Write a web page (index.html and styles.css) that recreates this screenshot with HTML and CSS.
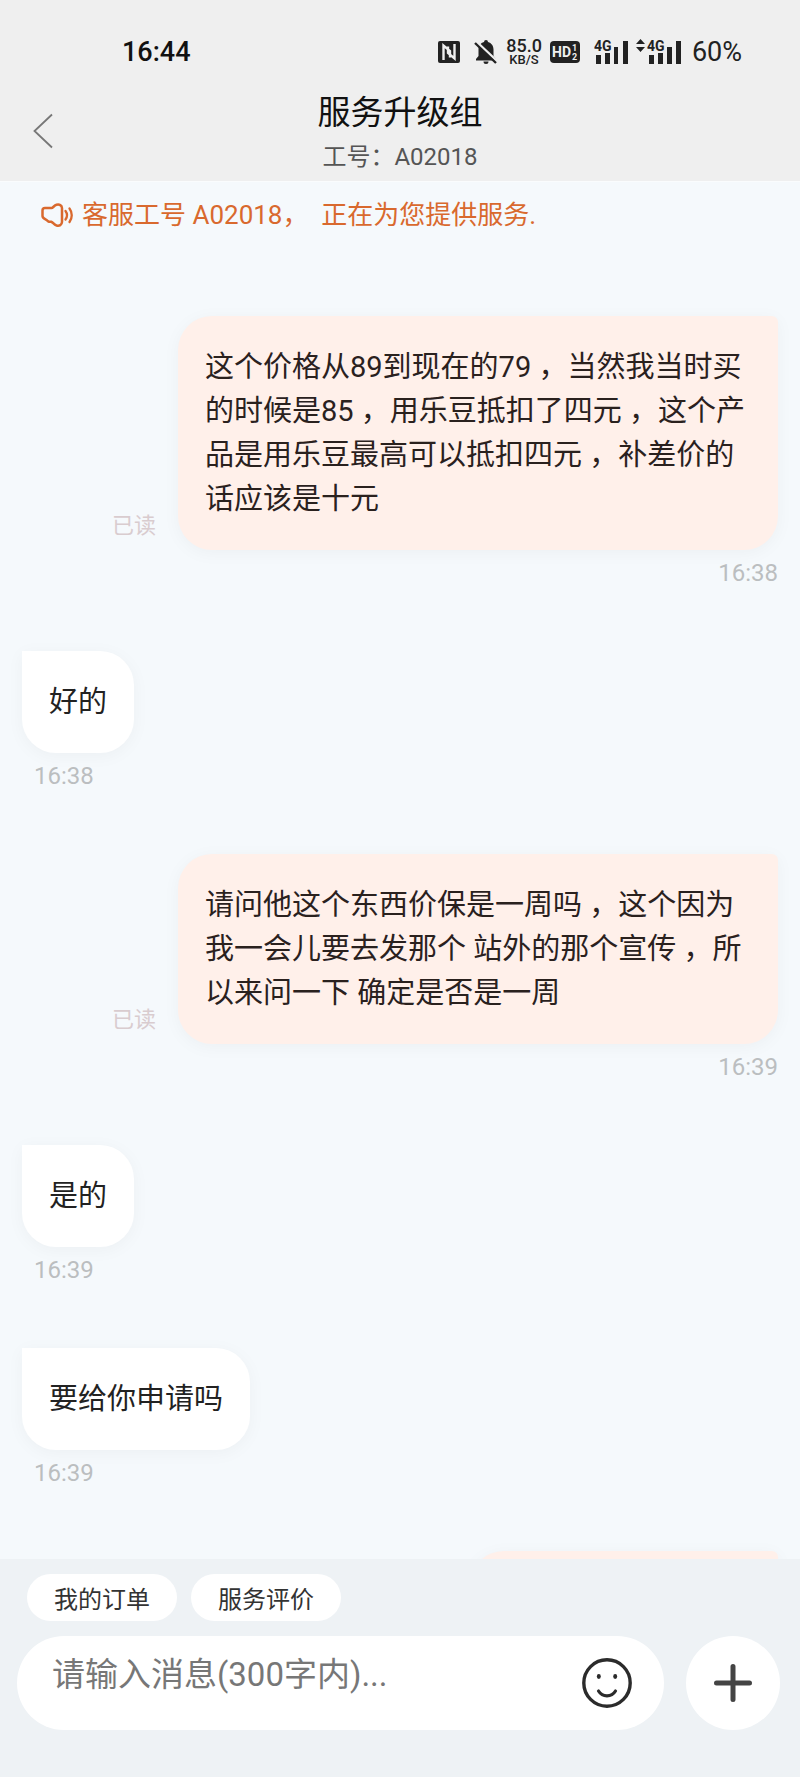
FILE: index.html
```html
<!DOCTYPE html>
<html lang="zh-CN">
<head>
<meta charset="utf-8">
<meta name="viewport" content="width=device-width, initial-scale=1">
<title>服务升级组</title>
<link rel="stylesheet" href="styles.css">
</head>
<body>
<header class="header">
  <div class="status">
    <span class="clock">16:44</span>
    <div class="indicators">
      <svg class="nfc" width="22" height="24" viewBox="0 0 22 24" aria-hidden="true">
        <rect x="0" y="1" width="22" height="22" rx="2" fill="#222"/>
        <path d="M5.500 20V5.500L12 11v6.500M16.500 4v14.500L10 13V6.500" fill="none" stroke="#efefef" stroke-width="2.400"/>
      </svg>
      <svg class="bell" width="24" height="26" viewBox="0 0 24 26" aria-hidden="true">
        <path d="M12 1a2 2 0 0 1 2 2c3.500 1 5.500 4 5.500 7.500V17l2.500 3v1.500H2V20l2.500-3v-6.500C4.500 7 6.500 4 10 3a2 2 0 0 1 2-2zM9.500 22.500h5a2.500 2.500 0 0 1-5 0z" fill="#222"/>
        <path d="M1 1.500 24 23" stroke="#efefef" stroke-width="2.500"/>
        <path d="M1 4 22 24" stroke="#222" stroke-width="2.400"/>
      </svg>
      <span class="speed"><span>85.0</span><span class="unit">KB/S</span></span>
      <svg class="hd" width="30" height="22" viewBox="0 0 30 22" aria-hidden="true">
        <rect width="30" height="22" rx="4" fill="#222"/>
        <text x="2" y="16" font-size="14" font-weight="700" fill="#efefef">HD</text>
        <text x="22" y="10" font-size="9" font-weight="700" fill="#efefef">1</text>
        <text x="22" y="19" font-size="9" font-weight="700" fill="#efefef">2</text>
      </svg>
      <svg class="signal" width="34" height="26" viewBox="0 0 34 26" aria-hidden="true">
        <text x="0" y="12" font-size="14" font-weight="700" fill="#222">4G</text>
        <path d="M2 16h5v9H2zM11 14h5v11h-5zM20 8h4v17h-4zM29 2h5v23h-5z" fill="#222"/>
      </svg>
      <svg class="signal-alt" width="46" height="26" viewBox="0 0 46 26" aria-hidden="true">
        <path d="M0 5 4.500 0 9 5zM0 8h9L4.500 13z" fill="#222"/>
        <text x="11" y="12" font-size="14" font-weight="700" fill="#222">4G</text>
        <path d="M13 16h5v9h-5zM22 14h5v11h-5zM31 8h5v17h-5zM40 2h5v23h-5z" fill="#222"/>
      </svg>
      <span class="battery">60%</span>
    </div>
  </div>
  <div class="titlebar">
    <button class="back" type="button" aria-label="返回">
      <svg width="22" height="36" viewBox="0 0 22 36" aria-hidden="true"><path d="M20 1.500 2.500 18 20 34.500" fill="none" stroke="#777" stroke-width="1.800"/></svg>
    </button>
    <div class="heading">
      <h1 class="title">服务升级组</h1>
      <p class="agent">工号：A02018</p>
    </div>
  </div>
</header>

<main class="chat">
  <p class="notice">
    <svg width="34" height="26" viewBox="0 0 34 26" aria-hidden="true">
      <path d="M5 6h6.500c1.500 0 2.500-2.500 5-3.200 3-.8 5.300.5 5.500 3.200v14c-.2 3-2.500 4.300-5.500 3.500-2.500-.7-3.500-3-5-3.700H9c-1 0-1.500-1.500-3.500-2.500-2-1-3-1.800-3-3.300V8.500C2.500 7 3.500 6 5 6z" fill="none" stroke="#d9692e" stroke-width="2.500" stroke-linejoin="round"/>
      <path d="M25.500 9c1.800 2.500 1.800 6 0 8.500M29.500 6.500c3 4 3 9.500 0 13.500" fill="none" stroke="#d9692e" stroke-width="2.300" stroke-linecap="round"/>
    </svg>
    <span>客服工号 A02018，&nbsp; 正在为您提供服务.</span>
  </p>

  <article class="message sent">
    <div class="row"><span class="read">已读</span><p class="bubble">这个价格从89到现在的79 ，当然我当时买的时候是85 ，用乐豆抵扣了四元 ，这个产品是用乐豆最高可以抵扣四元 ，补差价的话应该是十元</p></div>
    <time class="time">16:38</time>
  </article>
  <article class="message received">
    <div class="row"><p class="bubble">好的</p></div>
    <time class="time">16:38</time>
  </article>
  <article class="message sent">
    <div class="row"><span class="read">已读</span><p class="bubble">请问他这个东西价保是一周吗 ，这个因为我一会儿要去发那个 站外的那个宣传 ，所以来问一下 确定是否是一周</p></div>
    <time class="time">16:39</time>
  </article>
  <article class="message received">
    <div class="row"><p class="bubble">是的</p></div>
    <time class="time">16:39</time>
  </article>
  <article class="message received">
    <div class="row"><p class="bubble">要给你申请吗</p></div>
    <time class="time">16:39</time>
  </article>
  <article class="message sent">
    <div class="row"><p class="bubble partial"></p></div>
  </article>
</main>

<footer class="composer">
  <div class="shortcuts">
    <button class="shortcut" type="button">我的订单</button>
    <button class="shortcut" type="button">服务评价</button>
  </div>
  <div class="entry">
    <div class="field">
      <input class="input" type="text" maxlength="300" aria-label="消息" placeholder="请输入消息(300字内)...">
      <button class="emoji" type="button" aria-label="表情">
        <svg width="50" height="50" viewBox="0 0 50 50" aria-hidden="true">
          <circle cx="25" cy="25" r="23.200" fill="none" stroke="#2b2b2b" stroke-width="3.400"/>
          <ellipse cx="16.800" cy="18.500" rx="2" ry="2.400" fill="#2b2b2b"/>
          <ellipse cx="33.200" cy="18.500" rx="2" ry="2.400" fill="#2b2b2b"/>
          <path d="M16.500 33c4 6.500 13 6.500 17 0" fill="none" stroke="#2b2b2b" stroke-width="3.200" stroke-linecap="round"/>
        </svg>
      </button>
    </div>
    <button class="more" type="button" aria-label="更多">
      <svg width="40" height="40" viewBox="0 0 40 40" aria-hidden="true"><path d="M20 3.500v33M3.500 20h33" stroke="#444" stroke-width="5" stroke-linecap="round"/></svg>
    </button>
  </div>
</footer>
</body>
</html>
```
FILE: styles.css
```css
* {
  box-sizing: border-box;
}

body {
  display: flex;
  flex-direction: column;
  height: 100vh;
  margin: 0;
  background: #f5f9fc;
  color: #222;
  font-family: Roboto, "Noto Sans CJK SC", sans-serif;
}

h1,
p {
  margin: 0;
  font-weight: 400;
}

button,
input {
  padding: 0;
  border: 0;
  background: none;
  color: inherit;
  font: inherit;
}

svg {
  display: block;
  flex: none;
}

/* Header */

.header {
  flex: none;
  background: #efefef;
  border-bottom: 1px solid #fafcfd;
}

.status {
  display: flex;
  align-items: center;
  justify-content: space-between;
  height: 80px;
  padding: 24px 58px 0 122px;
}

.clock {
  color: #111;
  font-size: 27px;
  font-weight: 500;
}

.indicators {
  display: flex;
  align-items: center;
  gap: 8px;
}

.nfc,
.hd {
  margin-right: 6px;
}

.speed {
  display: flex;
  flex-direction: column;
  align-items: center;
  font-size: 18px;
  font-weight: 500;
  line-height: 16px;
}

.unit {
  font-size: 13px;
  line-height: 12px;
}

.battery {
  margin-left: 2px;
  font-size: 27px;
}

.titlebar {
  display: grid;
  grid-template-columns: 80px 1fr 80px;
  align-items: center;
  height: 101px;
}

.back {
  display: flex;
  align-items: center;
  height: 80px;
  padding-left: 32px;
}

.heading {
  display: flex;
  flex-direction: column;
  gap: 8px;
  padding-top: 5px;
  text-align: center;
}

.title {
  color: #111;
  font-size: 33px;
  line-height: 40px;
}

.agent {
  color: #555;
  font-size: 24px;
  line-height: 32px;
}

/* Conversation */

.chat {
  flex: 1;
  min-height: 0;
  padding: 15px 22px 0;
  overflow: hidden;
}

.notice {
  display: flex;
  align-items: center;
  gap: 8px;
  margin-bottom: 83px;
  padding-left: 18px;
  color: #d9692e;
  font-size: 26px;
  line-height: 36px;
}

.message {
  display: flex;
  flex-direction: column;
  align-items: flex-start;
  margin-bottom: 63px;
}

.sent {
  align-items: flex-end;
}

.row {
  display: flex;
  align-items: flex-end;
  gap: 22px;
}

.read {
  flex: none;
  margin-bottom: 9px;
  color: #d9cccf;
  font-size: 22px;
  line-height: 30px;
}

.bubble {
  max-width: 600px;
  padding: 29px 27px;
  border-radius: 0 34px 34px;
  background: #fff;
  box-shadow: 0 3px 18px rgba(0, 0, 0, 0.04);
  font-size: 29px;
  line-height: 44px;
}

.sent .bubble {
  border-radius: 34px 6px 34px 34px;
  background: #fff0ea;
  color: #2a211e;
}

.partial {
  width: 308px;
  height: 102px;
}

.time {
  margin-top: 8px;
  color: #bbbec0;
  font-size: 24px;
  line-height: 30px;
}

.received .time {
  margin-left: 12px;
}

/* Composer */

.composer {
  flex: none;
  padding: 15px 20px 47px 17px;
  background: #eef2f5;
}

.shortcuts {
  display: flex;
  gap: 14px;
  margin-bottom: 15px;
  padding-left: 10px;
}

.shortcut {
  height: 47px;
  padding: 0 27px;
  border-radius: 24px;
  background: #fff;
  color: #333;
  font-size: 24px;
}

.entry {
  display: flex;
  gap: 22px;
}

.field {
  display: flex;
  flex: 1;
  align-items: center;
  height: 94px;
  padding: 0 32px 0 35px;
  border-radius: 47px;
  background: #fff;
}

.input {
  flex: 1;
  min-width: 0;
  height: 94px;
  padding-bottom: 18px;
  font-size: 33px;
  outline: none;
}

.input::placeholder {
  color: #777;
  opacity: 1;
}

.more {
  display: flex;
  align-items: center;
  justify-content: center;
  width: 94px;
  height: 94px;
  border-radius: 50%;
  background: #fff;
}
```
